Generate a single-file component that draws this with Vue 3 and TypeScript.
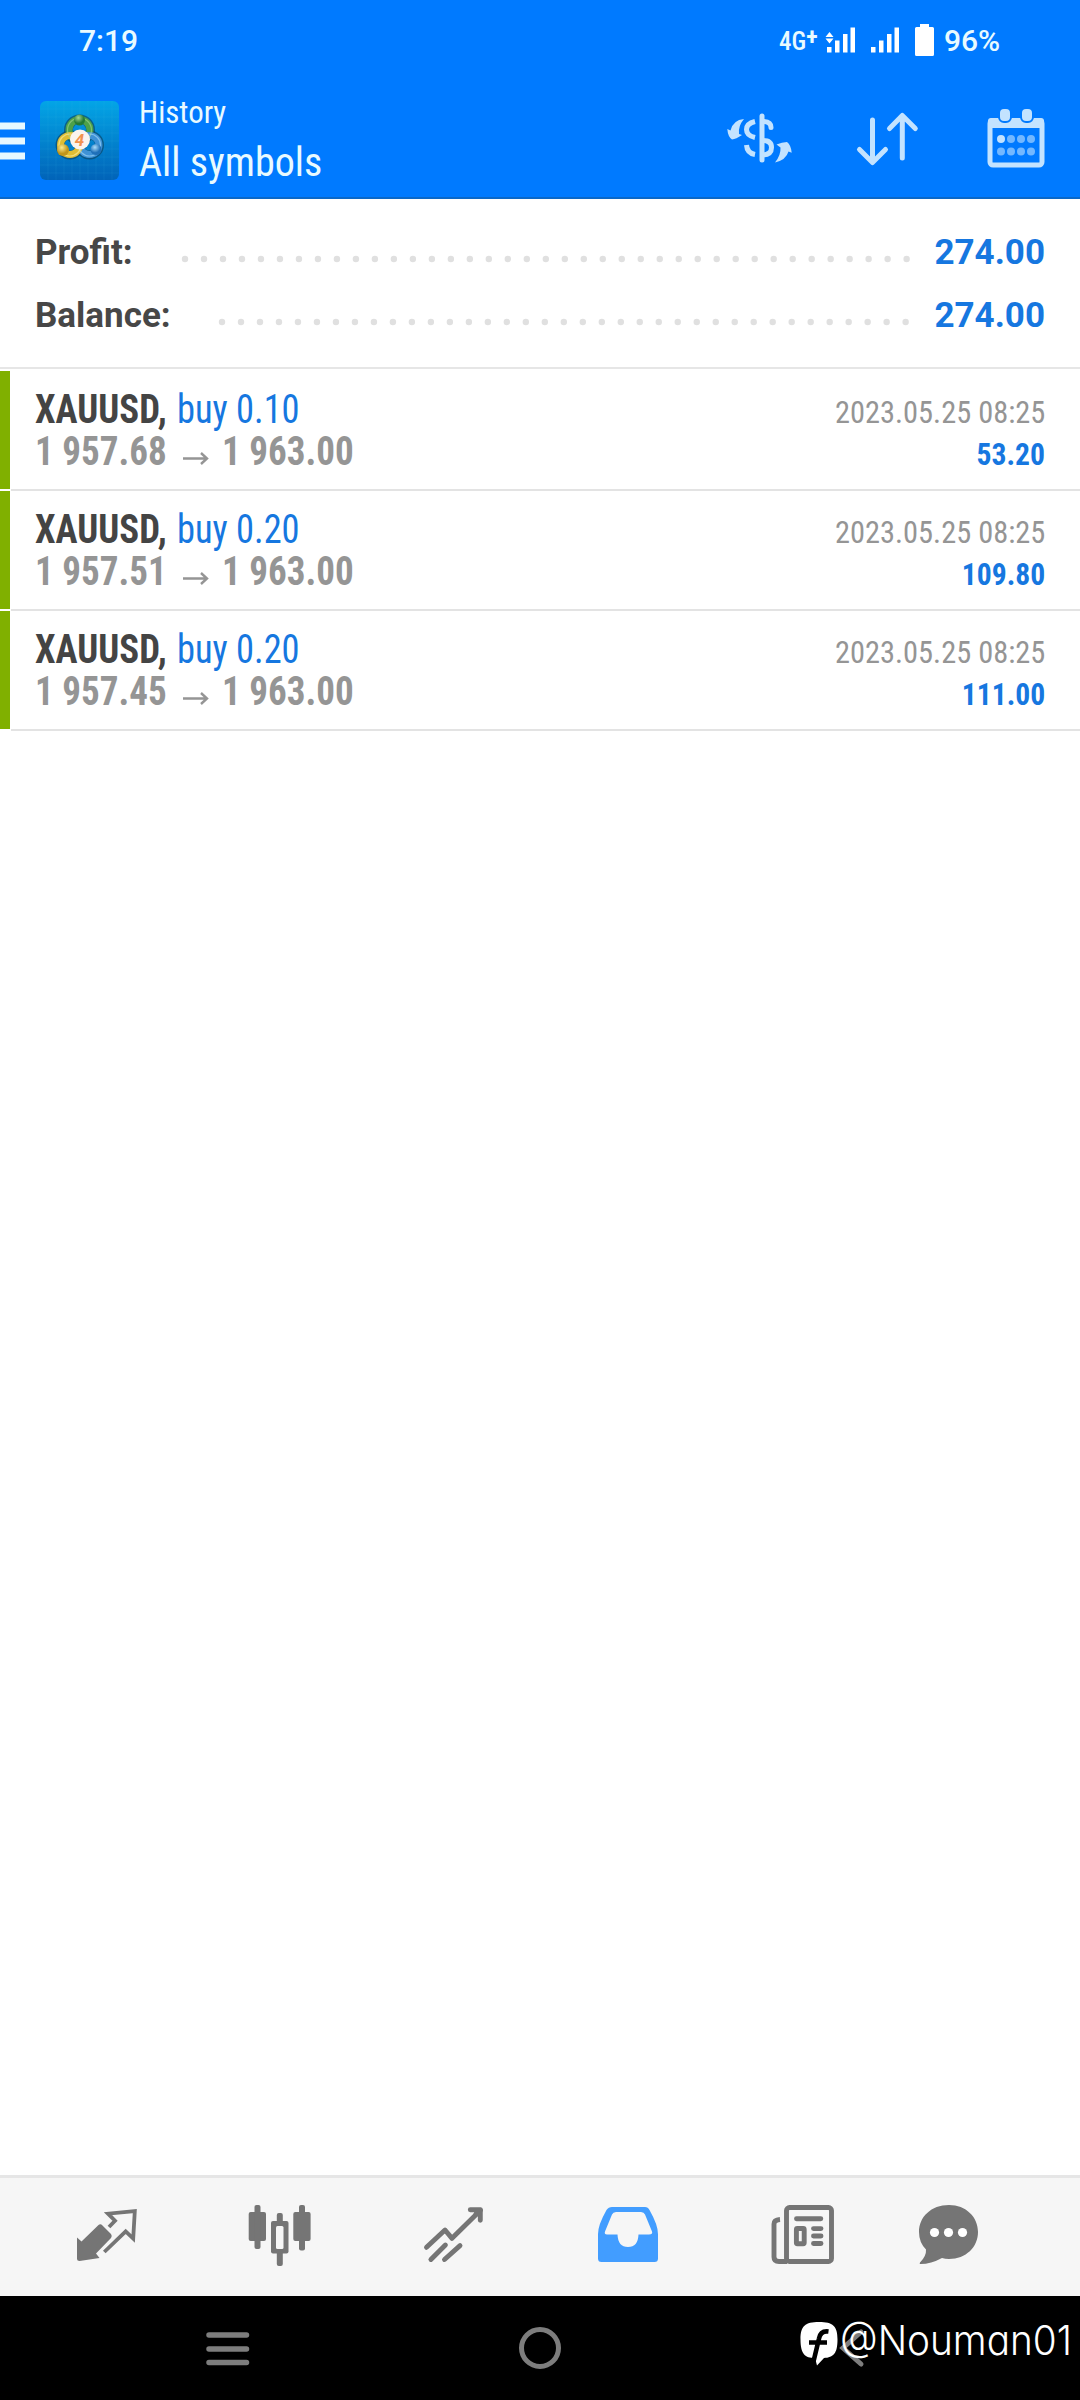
<script setup lang="ts">
interface Deal { symbol: string; side: string; open: string; close: string; time: string; profit: string }
const deals: Deal[] = [
  { symbol: 'XAUUSD,', side: 'buy 0.10', open: '1 957.68', close: '1 963.00', time: '2023.05.25 08:25', profit: '53.20' },
  { symbol: 'XAUUSD,', side: 'buy 0.20', open: '1 957.51', close: '1 963.00', time: '2023.05.25 08:25', profit: '109.80' },
  { symbol: 'XAUUSD,', side: 'buy 0.20', open: '1 957.45', close: '1 963.00', time: '2023.05.25 08:25', profit: '111.00' },
]
interface Total { label: string; value: string; lead: number; count: number }
const totals: Total[] = [
  { label: 'Profit:', value: '274.00', lead: 185, count: 39 },
  { label: 'Balance:', value: '274.00', lead: 222, count: 37 },
]
const gridLines = [8, 16, 24, 32, 40, 48, 56, 64, 72]
</script>

<template>
  <div class="screen">
    <header class="top">
      <div class="status">
        <span class="clock">7:19</span>
        <span class="net">4G<b>+</b></span>
        <svg class="signals" width="110" height="36" viewBox="825 22 110 36" fill="#fff">
          <path d="M827 47h4.500v5.500h-4.500zM835 40.500h4.500v12h-4.500zM843 34h4.500v18.500h-4.500zM850.500 27.500h4.500v25h-4.500z" />
          <path d="M829.500 32l4 5h-8zM829.500 43.500l4-5h-8z" />
          <path d="M871 47h4.500v5.500h-4.500zM879 40.500h4.500v12h-4.500zM887 34h4.500v18.500h-4.500zM894.500 27.500h4.500v25h-4.500z" />
          <path d="M920 24h9v3h3.500q1.500 0 1.500 1.500v26q0 1.500-1.500 1.500h-16q-1.500 0-1.500-1.500v-26q0-1.500 1.500-1.500h3.500z" />
        </svg>
        <span class="pct">96%</span>
      </div>
      <div class="bar">
        <svg class="burger" width="25" height="38" viewBox="0 0 25 38" fill="#e6f8ff"><path d="M0 .5h25v7h-25zM0 15.500h25v7h-25zM0 30.500h25v7h-25z" /></svg>
        <svg class="logo" width="79" height="79" viewBox="0 0 79 79">
          <defs>
            <linearGradient id="bg" x1="0" y1="0" x2="0" y2="1"><stop offset="0" stop-color="#03a5e6" /><stop offset="1" stop-color="#0163b8" /></linearGradient>
            <radialGradient id="gr" cx=".4" cy=".3"><stop offset="0" stop-color="#a5d692" /><stop offset="1" stop-color="#237a35" /></radialGradient>
            <radialGradient id="ye" cx=".4" cy=".3"><stop offset="0" stop-color="#fdea8e" /><stop offset="1" stop-color="#c0951a" /></radialGradient>
            <radialGradient id="bl" cx=".4" cy=".3"><stop offset="0" stop-color="#a9dcfa" /><stop offset="1" stop-color="#1e6fb8" /></radialGradient>
          </defs>
          <rect width="79" height="79" rx="6" fill="url(#bg)" />
          <g stroke="#4cc4f0" stroke-opacity=".13" stroke-width=".8"><path v-for="g in gridLines" :key="g" :d="`M${g} 0V79M0 ${g}H79`" /></g>
          <g fill="none">
            <g stroke="#0d3f5a" stroke-width="9" stroke-opacity=".6">
              <circle cx="39.500" cy="29" r="11" /><circle cx="30" cy="44" r="10" /><circle cx="49.500" cy="44" r="10" />
            </g>
            <g stroke-width="7">
              <circle cx="39.500" cy="29" r="10.500" stroke="#4da149" />
              <circle cx="49.500" cy="44" r="9.500" stroke="#3f92d6" />
              <circle cx="30" cy="44" r="9.500" stroke="#dfbd34" />
            </g>
            <g stroke-width="1.200" stroke-opacity=".6">
              <circle cx="39.500" cy="29" r="12" stroke="#a5d692" /><circle cx="49.500" cy="44" r="11" stroke="#a9dcfa" /><circle cx="30" cy="44" r="11" stroke="#fdf0a8" />
            </g>
          </g>
          <circle cx="39.500" cy="19" r="5.500" fill="url(#gr)" />
          <circle cx="23" cy="49" r="6" fill="url(#ye)" />
          <circle cx="56" cy="48.500" r="5.500" fill="url(#bl)" />
          <circle cx="40" cy="38.500" r="10" fill="#fbf4ee" />
          <text x="39.500" y="44.500" text-anchor="middle" font-family="Roboto, sans-serif" font-style="italic" font-weight="700" font-size="17" fill="#f2924f">4</text>
        </svg>
        <div class="titles">
          <span class="sub cond">History</span>
          <span class="main cond">All symbols</span>
        </div>
        <svg class="actions" width="320" height="64" viewBox="725 106 320 64" fill="none" stroke="#c3e3ff">
          <path d="M762 116v44" stroke-width="5" stroke-linecap="round" />
          <path d="M764 121.500q7 .5 7 6" stroke-width="5" stroke-linecap="round" />
          <path d="M763 140.500q8.500 0 8.500 7t-8.500 7.500" stroke-width="5" />
          <path d="M755 121.500q-8.500 2-8.500 8t8.500 8M746.500 145q.5 8 8.500 9.500" stroke-width="5" />
          <g fill="#c3e3ff" stroke="none">
            <path d="M744 119Q733 120 730.500 130.500L727.300 129Q728 137 732 139.500Q736 139 742 135L739 134Q738 126 744 119z" />
            <path d="M775 162.500Q786 160 788.500 151.500L791.700 152.700Q791 145 787 142Q782 142 776.500 144.500L780.500 147.500Q781 155 775 162.500z" />
          </g>
          <g stroke-width="5" stroke-linecap="round" stroke-linejoin="round">
            <path d="M872.500 120v42M859.500 149.500l13 13 13-13M902.300 158v-42M889.500 128.500l12.800-13 13 13" />
          </g>
          <rect x="990" y="120.500" width="52" height="44.500" rx="3" stroke-width="5" />
          <path d="M991 118h50q3 0 3 3v7h-56v-7q0-3 3-3z" fill="#c3e3ff" stroke="none" />
          <g fill="#c3e3ff" stroke="#007aff" stroke-width="2"><rect x="999" y="108" width="12" height="14" rx="5" /><rect x="1021" y="108" width="12" height="14" rx="5" /></g>
          <g fill="#73b8ff" stroke="none">
            <circle cx="1001" cy="139" r="4" fill="#c3e3ff" /><circle cx="1011" cy="139" r="4" /><circle cx="1021" cy="139" r="4" /><circle cx="1031" cy="139" r="4" />
            <circle cx="1001" cy="151.500" r="4" /><circle cx="1011" cy="151.500" r="4" /><circle cx="1021" cy="151.500" r="4" /><circle cx="1031" cy="151.500" r="4" />
          </g>
        </svg>
      </div>
    </header>

    <section class="totals">
      <div v-for="t in totals" :key="t.label" class="total">
        <span class="label">{{ t.label }}</span>
        <svg class="dots" width="880" height="8" viewBox="35 0 880 8" fill="#e0e0e0">
          <circle v-for="n in t.count" :key="n" :cx="t.lead + (n - 1) * 18.99" cy="4" r="3.200" />
        </svg>
        <span class="value">{{ t.value }}</span>
      </div>
    </section>

    <main class="deals">
      <article v-for="(d, i) in deals" :key="i" class="deal">
        <div class="mark"></div>
        <div class="body">
          <div class="line1">
            <span class="sym cond">{{ d.symbol }}</span><span class="side cond">{{ d.side }}</span><span class="time cond">{{ d.time }}</span>
          </div>
          <div class="line2">
            <span class="price cond">{{ d.open }}</span>
            <svg class="arrow" width="26" height="13" viewBox="0 0 26 13" fill="none" stroke="#959595" stroke-width="2.400"><path d="M0 6.500h24M18 1l6 5.500-6 5.500" /></svg>
            <span class="price cond">{{ d.close }}</span>
            <span class="gain cond">{{ d.profit }}</span>
          </div>
        </div>
      </article>
    </main>

    <nav class="tabs">
      <svg width="1080" height="118" viewBox="0 2178 1080 118" fill="none" stroke="#757575">
        <g>
          <path d="M77 2237.500l4.500 4 17-16.500q2-1.500 4 .5l8.500 8.500q1.500 2 0 4l-15 15.500 3.500 4.500-20 3q-2.500 0-2.500-2z" fill="#757575" stroke="none" />
          <path d="M109 2227l6-6.300-7-7 26.800-2.500-1.600 27.300-7.500-7.200-21.400 20.700" stroke-width="3.800" />
        </g>
        <g fill="#757575" stroke="none">
          <rect x="248.700" y="2212" width="17.300" height="29" rx="2" /><rect x="254.500" y="2205" width="6" height="44" rx="2" />
          <rect x="293.300" y="2212" width="17.300" height="29" rx="2" /><rect x="299" y="2205" width="6" height="45.500" rx="2" />
          <rect x="276.800" y="2213" width="6" height="53" rx="2" /><rect x="271" y="2221" width="17.500" height="32.500" rx="2" />
          <rect x="276" y="2226" width="7.500" height="23" rx="1.500" fill="#f6f6f6" />
        </g>
        <g stroke-width="4.900" stroke-linecap="round" stroke-linejoin="round">
          <path d="M426.500 2247.300l18.500-17.300 7 8.300 28.500-28M430.900 2259.500l14.500-14.500M444.500 2259.500l15.500-13.800" />
          <path d="M470.300 2209.700h10v10.500M476 2214l4-4" />
        </g>
        <path fill="#429dff" fill-rule="evenodd" stroke="none" d="M612 2207h33q3 0 4.500 3 8.500 15 8.500 24v24.500q0 3.500-3.500 3.500h-53q-3.500 0-3.500-3.500v-24.500q0-9 8.500-24 2-3 5.500-3zM616 2212q-3 0-4 2.500l-7 17q-1 3 2 3h10.500q.500 12.500 10.500 12.500t10.500-12.500h10.500q4 0 3-3l-7-17q-1-2.500-4-2.500z" />
        <g stroke-width="4.900">
          <rect x="786.500" y="2207.500" width="45" height="54" rx="3" />
          <path d="M780 2219.500q-6 .500-6 4.500v33q0 4.500 5 4.500h8" />
          <path d="M796.500 2218.700h24.300M813.500 2228.600h7.500M813.500 2236h7.500M813.500 2243.500h7.500" stroke-linecap="round" />
          <rect x="796.400" y="2228.500" width="7.800" height="15.200" rx="1" />
        </g>
        <path fill="#757575" stroke="none" d="M949 2205c17 0 29 12 29 27s-12 27-29 27q-4 0-7-1-11 6-21.500 6-1.500 0-.5-1.500 6.500-6.500 6-13-7-7-7-17.500c0-15 12-27 30-27z" />
        <g fill="#fff" stroke="none"><circle cx="934.500" cy="2232.500" r="4.600" /><circle cx="948.500" cy="2232.500" r="4.600" /><circle cx="962.500" cy="2232.500" r="4.600" /></g>
      </svg>
    </nav>

    <footer class="sys">
      <svg width="1080" height="104" viewBox="0 2296 1080 104" fill="none" stroke="#7d7d7d">
        <path d="M209 2335h37.500M209 2349h37.500M209 2362.500h37.500" stroke-width="5.500" stroke-linecap="round" />
        <circle cx="540" cy="2348" r="18.500" stroke-width="5" />
        <path d="M861 2332l-18 16 18 16" stroke-width="5" stroke-linecap="round" />
        <path fill="#fff" stroke="none" d="M819 2322c14 0 18.500 4 18.500 17.500 0 14-4 18-13.500 18.500l-7 7.500-2-7.500c-10 0-14.500-4-14.500-18.500 0-13.500 4.500-17.500 18.500-17.500z" />
        <path d="M828.500 2331.500q-8-1-9.500 7l-5.500 23M809 2342.500h18" stroke="#000" stroke-width="4.600" />
        <text class="tag" x="840" y="2355" textLength="232" lengthAdjust="spacingAndGlyphs">@Nouman01</text>
      </svg>
    </footer>
  </div>
</template>

<style>
body { margin: 0; background: #fff; }
</style>

<style scoped>
.screen { width: 1080px; height: 2400px; display: flex; flex-direction: column; background: #fff; font-family: Roboto, "Liberation Sans", sans-serif; overflow: hidden; white-space: nowrap; }
.cond { font-stretch: 75%; transform-origin: 0 50%; }
.top { height: 199px; box-sizing: border-box; background: #007aff; border-bottom: 2px solid #0a68c8; color: #e9faff; }
.status { height: 82px; display: flex; align-items: center; padding: 0 0 2px 79px; font-weight: 500; font-size: 30px; box-sizing: border-box; }
.clock { width: 700px; }
.net { font-size: 25px; width: 46px; font-weight: 500; font-stretch: 80%; }
.net b { font-size: 24px; font-weight: 700; line-height: 1; vertical-align: 5px; }
.signals { width: 110px; }
.pct { margin-left: 9px; }
.bar { height: 115px; display: flex; }
.burger { margin-top: 40px; }
.logo { margin: 19px 0 0 15px; }
.titles { margin: 11px 0 0 20px; width: 586px; display: flex; flex-direction: column; }
.sub { font-size: 32px; line-height: 38px; transform: scaleX(.965); }
.main { font-size: 41px; line-height: 48px; margin-top: 7px; transform: scaleX(.978); }
.actions { margin-top: 24px; }
.totals { height: 170px; border-bottom: 2px solid #e6e6e6; padding-top: 22px; box-sizing: border-box; }
.total { height: 63px; display: grid; grid-template-columns: 880px 1fr; padding: 0 35px; align-items: center; font-size: 35px; font-weight: 700; line-height: 62px; }
.label { grid-area: 1 / 1; color: #474747; }
.dots { grid-area: 1 / 1; margin-top: 13px; }
.value { grid-area: 1 / 2; text-align: right; color: #1677e0; }
.deals { padding-top: 2px; flex: 1; }
.deal { height: 120px; display: flex; }
.mark { width: 10px; height: 118px; background: #80b000; margin-right: 1px; }
.body { flex: 1; box-sizing: border-box; border-bottom: 2px solid #e3e3e3; padding: 15px 35px 0 24px; }
.line1, .line2 { display: flex; align-items: baseline; height: 42px; line-height: 47px; }
.sym { font-size: 40px; font-weight: 700; color: #444; width: 142px; transform: scaleX(.92); }
.side { font-size: 40px; color: #1677e0; transform: scaleX(.91); }
.time { margin-left: auto; font-size: 32px; color: #959595; transform: scaleX(.95); }
.price { font-size: 40px; font-weight: 700; color: #959595; width: 131px; transform: scaleX(.927); }
.arrow { margin: 0 13px 0 17px; }
.gain { margin-left: auto; font-size: 32px; font-weight: 700; color: #1677e0; transform: scaleX(.925); }
.time, .gain { transform-origin: 100% 50%; }
.tabs { height: 118px; background: #f6f6f6; border-top: 3px solid #e6e6e6; }
.sys { height: 104px; background: #000; }
.tag { fill: #fff; stroke: none; font-family: Inter, sans-serif; font-weight: 300; font-size: 41px; font-feature-settings: "cv11"; }
svg { display: block; flex: none; }
</style>
